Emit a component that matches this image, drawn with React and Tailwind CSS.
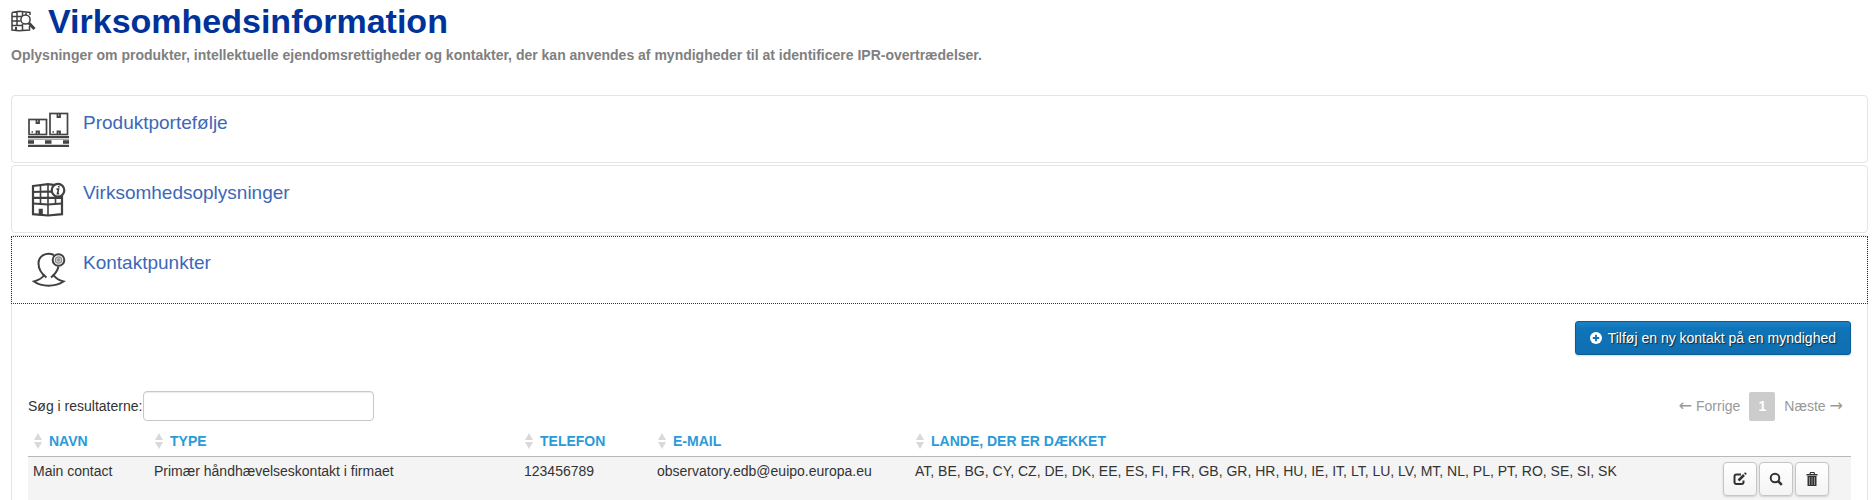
import React, { useState } from 'react';

const contacts = [
  {
    id: 1,
    name: 'Main contact',
    type: 'Primær håndhævelseskontakt i firmaet',
    phone: '123456789',
    email: 'observatory.edb@euipo.europa.eu',
    countries:
      'AT, BE, BG, CY, CZ, DE, DK, EE, ES, FI, FR, GB, GR, HR, HU, IE, IT, LT, LU, LV, MT, NL, PL, PT, RO, SE, SI, SK',
  },
];

const columns = [
  { label: 'Navn', width: 'w-[121px]' },
  { label: 'Type', width: 'w-[370px]' },
  { label: 'Telefon', width: 'w-[133px]' },
  { label: 'E-mail', width: 'w-[258px]' },
  { label: 'Lande, der er dækket', width: '' },
];

const CompanySearchIcon = () => (
  <svg viewBox="0 0 25 22" className="w-[25px] h-[22px]" fill="none" stroke="#404040" strokeWidth="1.5">
    <path d="M1 2.5 L8 1.2 L19 2.5 V5 M1 2.5 V20 L8 20.8 L18.5 20 V16 M6 2 V16 M11.5 2 V6 M15 2 V5 M1 6.5 H11 M1 11 H9.5 M1 15.5 H12 M11.5 14 V20.5" />
    <path d="M4 20 V17 H6 V20" fill="#404040" stroke="none" />
    <circle cx="14.5" cy="9.5" r="4.6" fill="#fff" />
    <path d="M17.8 13 L23.5 19" strokeWidth="3" />
  </svg>
);

const ProductsIcon = () => (
  <svg viewBox="0 0 42 36" className="w-[42px] h-9" fill="none" stroke="#444">
    <rect x="1" y="7.5" width="17.5" height="15" strokeWidth="1.7" />
    <rect x="22" y="1.5" width="17.5" height="21" strokeWidth="1.7" />
    <path d="M8.5 8 V11 H11 V8 M29.5 2 V5 H32 V2 M8.5 22 V19.500 H11 V22 M29.5 22 V19.500 H32 V22" strokeWidth="1.8" />
    <path d="M3.500 20 H5 M24.500 20 H26" strokeWidth="1.5" />
    <path d="M0 25.200 H41" strokeWidth="2.200" />
    <path d="M0 33.800 H41" strokeWidth="2.200" />
    <path d="M0 27.500 H41" stroke="#aaa" strokeWidth="1" />
    <path d="M0 30 H6 M17 30 H23.500 M35 30 H41" strokeWidth="3.500" />
  </svg>
);

const CompanyIcon = () => (
  <svg viewBox="0 0 42 36" className="w-[42px] h-9" fill="none" stroke="#404040" strokeWidth="2.2">
    <path d="M5 4 L20 2.2 L34 4 V32.2 L20 33.500 L5 32.2 Z" />
    <path d="M12.500 3 V22 M20 2 V33 M27.500 3 V22" strokeWidth="1.6" />
    <path d="M5 10 L20 9.5 L34 10 M5 15.800 H34 M5 21.500 L20 22.500 L34 21.500" />
    <path d="M11.500 32.500 V27.500 H14 V32.500 Z" fill="#404040" strokeWidth="1.6" />
    <circle cx="30" cy="8.2" r="6.3" fill="#fff" />
    <path d="M28.500 7.2 H30.500 L29.500 11.700 H31.200 M30.800 3.900 V5.500" strokeWidth="1.7" />
  </svg>
);

const ContactIcon = () => (
  <svg viewBox="0 0 42 36" className="w-[42px] h-9" fill="none" stroke="#404040" strokeWidth="2">
    <path d="M26 3 C18 -0.500 10.500 4 10.500 11.500 C10.500 17 14.500 22.500 18.500 25.500 M30.500 14.500 C29.500 19 26 23 23 25.500" />
    <path d="M16.500 22.500 C15 25.500 10 28.500 6 29.500 C14 35 27 35 35.500 29.500 C31.500 28.500 27.500 26 25 22.500" />
    <circle cx="30.500" cy="8" r="5.800" fill="#fff" />
    <circle cx="30.500" cy="8" r="3.200" stroke="#888" strokeWidth="1.200" fill="#ccc" />
    <circle cx="30.500" cy="8" r="1.400" fill="#888" stroke="none" />
  </svg>
);

const PlusCircleIcon = () => (
  <svg viewBox="0 0 12 12" className="w-3 h-3">
    <circle cx="6" cy="6" r="6" fill="#fff" />
    <path d="M6 2.800 V9.200 M2.800 6 H9.200" stroke="#0f74b8" strokeWidth="1.900" />
  </svg>
);

const SortIcon = () => (
  <svg viewBox="0 0 8 16" className="w-2 h-4" fill="#d9d9d9">
    <path d="M4 0 L8 7 H0 Z" />
    <path d="M0 9 H8 L4 16 Z" />
  </svg>
);

const EditIcon = () => (
  <svg viewBox="0 0 14 14" className="w-[14px] h-[14px]" fill="none" stroke="#333">
    <path d="M8 2.500 H3.500 Q1.500 2.500 1.500 4.500 V10 Q1.500 12 3.500 12 H8.500 Q10.500 12 10.500 10 V8.500" strokeWidth="2" />
    <path d="M5.500 8.500 L11 3" strokeWidth="2.500" />
    <path d="M11.800 2.200 L13 1" strokeWidth="2.400" />
  </svg>
);

const ViewIcon = () => (
  <svg viewBox="0 0 14 14" className="w-[14px] h-[14px]" fill="none" stroke="#333">
    <circle cx="6" cy="6" r="4.300" strokeWidth="2" />
    <path d="M9 9 L12.800 12.800" strokeWidth="2.600" />
  </svg>
);

const TrashIcon = () => (
  <svg viewBox="0 0 14 14" className="w-[14px] h-[14px]" fill="#333">
    <path d="M5 0 H9.500 L10 2 H12.500 V3.500 H1.500 V2 H4.500 Z M5.800 1 V2 H8.700 V1 Z" fillRule="evenodd" />
    <path d="M2.500 4 H11.500 V14 H2.500 Z" />
    <path d="M4.500 5 V13 M7 5 V13 M9.500 5 V13" stroke="#aaa" strokeWidth="0.800" />
  </svg>
);

const Section = ({ icon, title, open, onClick }) => (
  <a
    href="#"
    onClick={onClick}
    className={
      open
        ? 'flex h-[68px] -mx-px pl-4 pt-3 gap-[13px] border border-dotted border-[#333] outline-none'
        : 'flex h-[66px] pl-4 pt-[13px] gap-[13px] outline-none'
    }
  >
    <span className="pt-[3px]">{icon}</span>
    <span className="text-[19px] leading-7 text-[#3c68b8]">{title}</span>
  </a>
);

const RowButton = ({ label, children }) => (
  <button
    aria-label={label}
    className="flex items-center justify-center w-[34px] h-[34px] rounded border border-[#c5c5c5] bg-linear-to-b from-white to-[#f4f4f4] shadow-[0_1px_2px_rgba(0,0,0,0.15)]"
  >
    {children}
  </button>
);

const Arrow = ({ children }) => (
  <span className="font-['DejaVu_Sans',sans-serif] text-[16px] leading-5">{children}</span>
);

const ContactTable = ({ rows }) => (
  <table className="w-full table-fixed border-collapse">
    <thead>
      <tr className="border-b border-[#b8b8b8]">
        {columns.map(column => (
          <th key={column.label} className={`${column.width} h-[35px] px-[6px] pt-[6px] text-left font-bold uppercase text-[#2a9bd8]`}>
            <span className="flex items-center gap-[7px]">
              <SortIcon />
              {column.label}
            </span>
          </th>
        ))}
        <th className="w-[133px]" />
      </tr>
    </thead>
    <tbody>
      {rows.map(row => (
        <tr key={row.id} className="bg-[#f4f4f4] align-top">
          <td className="px-[5px] py-1">{row.name}</td>
          <td className="px-[5px] py-1">{row.type}</td>
          <td className="px-[5px] py-1">{row.phone}</td>
          <td className="px-[5px] py-1">{row.email}</td>
          <td className="px-[5px] py-1">{row.countries}</td>
          <td className="p-[5px]">
            <div className="flex gap-[2px]">
              <RowButton label="Rediger"><EditIcon /></RowButton>
              <RowButton label="Vis"><ViewIcon /></RowButton>
              <RowButton label="Slet"><TrashIcon /></RowButton>
            </div>
          </td>
        </tr>
      ))}
    </tbody>
  </table>
);

const App = () => {
  const [searchTerm, setSearchTerm] = useState('');
  const [open, setOpen] = useState(true);

  const filteredContacts = contacts.filter(contact =>
    contact.name.toLowerCase().includes(searchTerm.toLowerCase())
  );

  const toggle = (e) => {
    e.preventDefault();
    setOpen(prev => !prev);
  };

  return (
    <div className="bg-white pl-[11px] pr-[5px] font-['Liberation_Sans',Arial,sans-serif] text-[14px] leading-5 text-[#333]">
      <header className="h-[95px]">
        <h1 className="flex items-center gap-3 h-[42px] text-[34px] leading-[42px] font-bold text-[#003399]">
          <CompanySearchIcon />
          Virksomhedsinformation
        </h1>
        <p className="pt-[3px] font-bold text-[#808080]">
          Oplysninger om produkter, intellektuelle ejendomsrettigheder og kontakter, der kan anvendes af myndigheder til at identificere IPR-overtrædelser.
        </p>
      </header>

      <main className="flex flex-col gap-[2px]">
        <section className="border border-[#e5e5e5] rounded">
          <Section icon={<ProductsIcon />} title="Produktportefølje" />
        </section>
        <section className="border border-[#e5e5e5] rounded">
          <Section icon={<CompanyIcon />} title="Virksomhedsoplysninger" />
        </section>
        <section className="border border-b-0 border-[#e5e5e5] rounded-t">
          <Section icon={<ContactIcon />} title="Kontaktpunkter" open onClick={toggle} />
          {open && (
            <div className="px-4 pt-[17px]">
              <div className="flex justify-end">
                <button className="flex items-center gap-[6px] h-[34px] px-[14px] rounded-[3px] border border-[#0a5c96] bg-linear-to-b from-[#1a7fc4] from-5% via-[#0f74b8] via-20% to-[#0f6fb2] text-white [text-shadow:1px_1px_1px_#222] shadow-[0_1px_2px_rgba(0,0,0,0.15)]">
                  <PlusCircleIcon />
                  Tilføj en ny kontakt på en myndighed
                </button>
              </div>
              <div className="flex justify-between items-center mt-9">
                <div className="flex items-center gap-px">
                  <label htmlFor="search">Søg i resultaterne:</label>
                  <input
                    id="search"
                    type="text"
                    value={searchTerm}
                    onChange={e => setSearchTerm(e.target.value)}
                    className="w-[231px] h-[30px] px-2 rounded border border-[#c8c8c8] shadow-[inset_0_1px_1px_rgba(0,0,0,0.08)] outline-none"
                  />
                </div>
                <nav className="flex items-center gap-[9px] pr-2 text-[#999]">
                  <button className="flex items-center gap-1"><Arrow>←</Arrow>Forrige</button>
                  <button className="w-[26px] h-[29px] rounded-xs bg-[#ccc] font-bold text-white">1</button>
                  <button className="flex items-center gap-1">Næste<Arrow>→</Arrow></button>
                </nav>
              </div>
              <ContactTable rows={filteredContacts} />
            </div>
          )}
        </section>
      </main>
    </div>
  );
};

export default App;
